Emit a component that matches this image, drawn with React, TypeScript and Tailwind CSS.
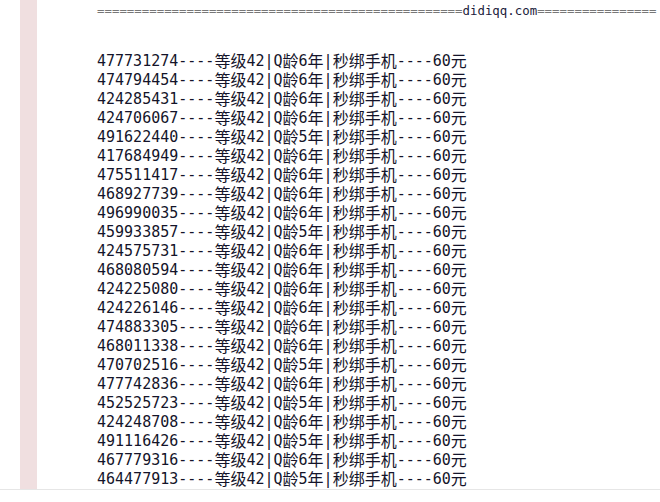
const rows: [string, string][] = [
  ["477731274", "6"],
  ["474794454", "6"],
  ["424285431", "6"],
  ["424706067", "6"],
  ["491622440", "5"],
  ["417684949", "6"],
  ["475511417", "6"],
  ["468927739", "6"],
  ["496990035", "6"],
  ["459933857", "5"],
  ["424575731", "6"],
  ["468080594", "6"],
  ["424225080", "6"],
  ["424226146", "6"],
  ["474883305", "6"],
  ["468011338", "6"],
  ["470702516", "5"],
  ["477742836", "6"],
  ["452525723", "5"],
  ["424248708", "6"],
  ["491116426", "5"],
  ["467779316", "6"],
  ["464477913", "5"],
];

// split a line into latin / CJK runs so the CJK glyphs can be a bit larger
const Runs: React.FC<{ text: string }> = ({ text }) => {
  const parts = text.match(/[\u4e00-\u9fff]+|[^\u4e00-\u9fff]+/g) ?? [];
  return (
    <>
      {parts.map((p, i) =>
        /[\u4e00-\u9fff]/.test(p) ? (
          <span
            key={i}
            className="block h-[16px] overflow-visible text-[16px] leading-[16px] [font-family:'Noto_Sans_CJK_SC',sans-serif]"
          >
            {p}
          </span>
        ) : (
          <span key={i} className="block h-[19px] leading-[19px]">
            {p}
          </span>
        )
      )}
    </>
  );
};

export default function App() {
  const eqLeft = "=".repeat(49);
  const eqRight = "=".repeat(16);
  return (
    <div className="h-[502px] w-[660px] overflow-hidden bg-white">
      <div className="flex h-[490px] border-b border-[#e6e6e6]">
        <div className="w-5 shrink-0" />
        <div className="w-[17px] shrink-0 bg-[#f0dfe0]" />
        <div className="flex-1 overflow-hidden whitespace-pre pl-[60px]">
          <div className="pt-[3px] text-[12.4px] leading-[16px] [font-family:'DejaVu_Sans_Mono',monospace]">
            <span className="text-[#777]">{eqLeft}</span>
            <span className="text-[#1a1a3a]">didiqq.com</span>
            <span className="text-[#777]">{eqRight}</span>
          </div>
          <div className="mt-[33px] text-[15px] leading-[19px] text-[#14142a] [font-family:'DejaVu_Sans_Mono',monospace]">
            {rows.map(([qq, age]) => (
              <div key={qq} className="flex h-[19px] items-start">
                <Runs text={`${qq}----等级42|Q龄${age}年|秒绑手机----60元`} />
              </div>
            ))}
          </div>
        </div>
      </div>
    </div>
  );
}
